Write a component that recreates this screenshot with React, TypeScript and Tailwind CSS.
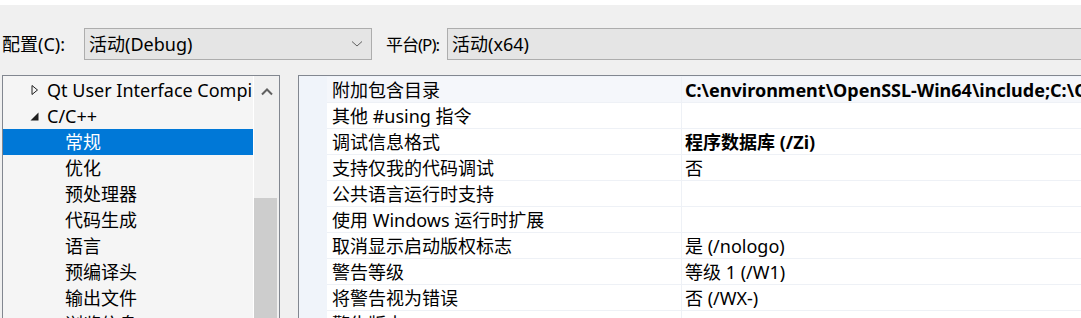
import React from "react";

const font = { fontFamily: '"Noto Sans", "Noto Sans CJK SC", sans-serif' };

const treeItems = ["常规", "优化", "预处理器", "代码生成", "语言", "预编译头", "输出文件", "浏览信息"];

const props: { name: string; value: string; bold?: boolean }[] = [
  { name: "附加包含目录", value: "C:\\environment\\OpenSSL-Win64\\include;C:\\Qt\\include", bold: true },
  { name: "其他 #using 指令", value: "" },
  { name: "调试信息格式", value: "程序数据库 (/Zi)", bold: true },
  { name: "支持仅我的代码调试", value: "否" },
  { name: "公共语言运行时支持", value: "" },
  { name: "使用 Windows 运行时扩展", value: "" },
  { name: "取消显示启动版权标志", value: "是 (/nologo)" },
  { name: "警告等级", value: "等级 1 (/W1)" },
  { name: "将警告视为错误", value: "否 (/WX-)" },
  { name: "警告版本", value: "" },
];

function Chevron() {
  return (
    <svg width="12" height="8" viewBox="0 0 12 8" className="shrink-0">
      <path d="M1 1.5 L6 6 L11 1.5" fill="none" stroke="#606060" strokeWidth="1" />
    </svg>
  );
}

function Combo({ text, className }: { text: string; className: string }) {
  return (
    <div className={`h-[32px] border border-[#adadad] bg-[#e5e5e5] flex items-center pl-[4px] pr-[8px] ${className}`}>
      <span className="flex-1 text-[18px] leading-none whitespace-nowrap">{text}</span>
      <Chevron />
    </div>
  );
}

export default function App() {
  return (
    <div className="w-[1081px] h-[318px] overflow-hidden bg-[#f0f0f0] text-black" style={font}>
      <div className="h-[5px] bg-white" />
      <div className="flex items-center h-[32px] mt-[23px]">
        <span className="ml-[2px] w-[82px] shrink-0 text-[18px] leading-none whitespace-nowrap">配置(C):</span>
        <Combo text="活动(Debug)" className="w-[288px] shrink-0" />
        <span className="ml-[14px] w-[61px] shrink-0 text-[17px] leading-none whitespace-nowrap tracking-[-1px]">平台(P):</span>
        <Combo text="活动(x64)" className="flex-1 -mr-[22px]" />
      </div>
      <div className="flex mt-[15px] h-[243px]">
        {/* tree */}
        <div className="ml-[2px] w-[278px] border-l border-t border-r border-[#828790] bg-[#f5f5f5] flex">
          <div className="w-[250px] pt-[1px] overflow-hidden">
            <div className="h-[26px] flex items-center whitespace-nowrap text-[18px]">
              <svg width="8" height="10" viewBox="0 0 8 10" className="ml-[28px] mr-[8px] shrink-0">
                <path d="M1 0.5 L6.5 5 L1 9.5 Z" fill="none" stroke="#1e1e1e" strokeWidth="1" />
              </svg>
              <span>Qt User Interface Compiler (.ui)</span>
            </div>
            <div className="h-[26px] flex items-center whitespace-nowrap text-[18px]">
              <svg width="9" height="9" viewBox="0 0 9 9" className="ml-[27px] mr-[8px] shrink-0">
                <path d="M8.5 0.5 L8.5 8.5 L0.5 8.5 Z" fill="#1e1e1e" />
              </svg>
              <span>C/C++</span>
            </div>
            {treeItems.map((t, i) => (
              <div
                key={t}
                className={`h-[26px] flex items-center pl-[62px] text-[18px] whitespace-nowrap ${i === 0 ? "bg-[#0078d7] text-white" : ""}`}
              >
                {t}
              </div>
            ))}
          </div>
          <div className="w-[1px] bg-white" />
          <div className="w-[25px] bg-[#f0f0f0] flex flex-col">
            <div className="h-[26px] flex items-center justify-center pt-[6px]">
              <svg width="12" height="8" viewBox="0 0 12 8">
                <path d="M1 6.5 L6 1.5 L11 6.5" fill="none" stroke="#606060" strokeWidth="2" />
              </svg>
            </div>
            <div className="h-[96px]" />
            <div className="flex-1 bg-[#cdcdcd] mr-[2px]" />
          </div>
        </div>
        {/* property grid */}
        <div className="ml-[18px] flex-1 border-l border-t border-[#828790] bg-[#f0f4fa] overflow-hidden">
          <div className="pl-[28px] pt-[1px]">
            {props.map((p, i) => (
              <div
                key={p.name}
                className={`h-[26px] flex border-b border-[#eef1f6] text-[18px] whitespace-nowrap ${i === 0 ? "bg-[#f5f7fb]" : "bg-white"}`}
              >
                <div className="w-[355px] pl-[5px] pt-[1px] flex items-center border-r border-[#eef1f6]">{p.name}</div>
                <div className={`flex-1 pl-[3px] pt-[1px] flex items-center overflow-hidden ${p.bold ? "font-bold" : ""}`}>{p.value}</div>
              </div>
            ))}
          </div>
        </div>
      </div>
    </div>
  );
}
